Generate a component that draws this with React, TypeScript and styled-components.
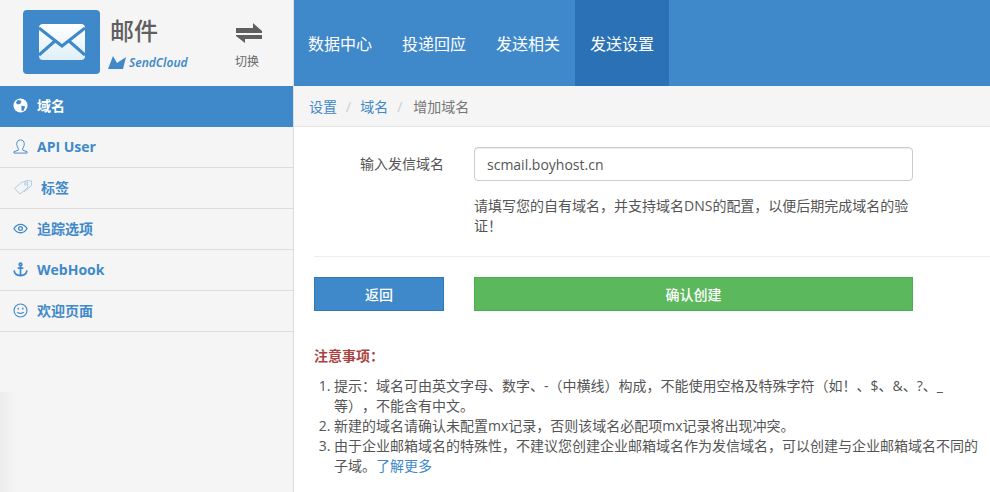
import React from 'react'
import styled, { createGlobalStyle } from 'styled-components'

const GlobalStyle = createGlobalStyle`
  html, body {
    margin: 0;
    padding: 0;
    background: #fff;
  }
  body {
    font-family: "Open Sans", "Noto Sans CJK SC", sans-serif;
    font-size: 14px;
    color: #555;
    text-spacing-trim: space-all;
  }
`

const Page = styled.div`
  width: 990px;
  height: 492px;
  overflow: hidden;
  display: grid;
  grid-template-columns: 294px 1fr;
`

const Sidebar = styled.aside`
  background: #f5f5f5;
  border-right: 1px solid #ddd;
  box-sizing: border-box;
  height: 492px;
  position: relative;
`

const Corner = styled.div`
  position: absolute;
  left: 0;
  bottom: 0;
  width: 16px;
  height: 100px;
  background: linear-gradient(90deg, #ececec, #f5f5f5);
`

const Brand = styled.div`
  height: 86px;
  box-sizing: border-box;
  display: flex;
  padding: 10px 0 0 23px;
`

const LogoBox = styled.div`
  width: 77px;
  height: 64px;
  background: #3f89ca;
  border-radius: 4px;
  display: flex;
  align-items: center;
  justify-content: center;
`

const BrandText = styled.div`
  margin-left: 10px;
  width: 98px;
`

const BrandTitle = styled.div`
  font-size: 24px;
  line-height: 32px;
  margin-top: 5px;
  color: #5f5f5f;
  font-weight: 500;
`

const CloudRow = styled.div`
  display: flex;
  align-items: center;
  gap: 3px;
  margin: 7px 0 0 -2px;
  color: #3f89ca;
  font-size: 12px;
  font-style: italic;
  font-weight: 600;
  font-family: "Noto Sans", sans-serif;
`

const Switcher = styled.div`
  margin-left: 16px;
  width: 46px;
  display: flex;
  flex-direction: column;
  align-items: center;
  color: #666;
  font-size: 12px;
  padding-top: 13px;
`

const SwitchGlyph = styled.svg`
  margin-left: 4px;
`

const SwitchLabel = styled.span`
  margin-top: 11px;
  line-height: 16px;
`

const SideItem = styled.a<{ $active?: boolean }>`
  height: 41px;
  box-sizing: border-box;
  display: flex;
  align-items: center;
  padding: 0 0 2px 13px;
  gap: 9px;
  font-size: 14px;
  font-weight: 700;
  background: ${(p) => (p.$active ? '#3f89ca' : 'transparent')};
  color: ${(p) => (p.$active ? '#fff' : '#3f89ca')};
  border-bottom: 1px solid ${(p) => (p.$active ? '#3f89ca' : '#ddd')};
`

const SideIcon = styled.svg<{ $wide?: boolean }>`
  width: ${(p) => (p.$wide ? '20px' : '15px')};
  height: 15px;
  flex: none;
`

const TagLabel = styled.span`
  margin-left: -1px;
`

const Main = styled.main`
  min-width: 0;
`

const TopNav = styled.nav`
  height: 86px;
  background: #3f89ca;
  display: flex;
  margin-left: -1px;
`

const NavItem = styled.a<{ $active?: boolean }>`
  width: 94px;
  display: flex;
  align-items: center;
  justify-content: center;
  color: #fff;
  font-size: 16px;
  background: ${(p) => (p.$active ? '#2a72b5' : 'transparent')};
`

const Crumbs = styled.div`
  height: 41px;
  box-sizing: border-box;
  background: #f5f5f5;
  border-bottom: 1px solid #e5e5e5;
  display: flex;
  align-items: center;
  padding-left: 15px;
  font-size: 14px;
  color: #777;
`

const CrumbLink = styled.a`
  color: #3f89ca;
`

const CrumbSep = styled.span`
  color: #ccc;
  margin: 0 9px;
`

const CrumbCurrent = styled.span`
  margin-left: 2px;
`

const Body = styled.div`
  padding: 20px 0 0 20px;
`

const FormRow = styled.div`
  display: grid;
  grid-template-columns: 130px 439px;
  column-gap: 30px;
`

const FieldLabel = styled.label`
  justify-self: end;
  line-height: 34px;
  color: #555;
`

const TextInput = styled.input`
  width: 100%;
  height: 34px;
  box-sizing: border-box;
  border: 1px solid #ccc;
  border-radius: 4px;
  padding: 0 12px;
  font: inherit;
  font-size: 14px;
  color: #555;
  outline: none;
  box-shadow: inset 0 1px 1px rgba(0, 0, 0, 0.075);
`

const Help = styled.p`
  grid-column: 2;
  margin: 15px 0 0;
  line-height: 20px;
  color: #555;
`

const Divider = styled.hr`
  border: 0;
  border-top: 1px solid #eee;
  margin: 20px 0;
`

const Button = styled.button<{ $color: string; $edge: string }>`
  height: 34px;
  border: 1px solid ${(p) => p.$edge};
  background: ${(p) => p.$color};
  color: #fff;
  font: inherit;
  font-size: 14px;
  font-weight: 500;
  padding: 0;
`

const NoticeTitle = styled.div`
  margin-top: 35px;
  color: #a94442;
  font-weight: 700;
  font-size: 14px;
  line-height: 20px;
`

const Notes = styled.ol`
  margin: 10px 0 0;
  padding-left: 20px;
  font-size: 14px;
  line-height: 20px;
  color: #555;
`

const MoreLink = styled.a`
  color: #3f89ca;
`

const navItems = ['数据中心', '投递回应', '发送相关', '发送设置']

const MailLogo = () => (
  <svg width="48" height="38" viewBox="0 0 48 38">
    <defs>
      <linearGradient id="env" x1="0" y1="0" x2="0" y2="1">
        <stop offset="0" stopColor="#ffffff" />
        <stop offset="1" stopColor="#dfeff8" />
      </linearGradient>
    </defs>
    <rect x="1" y="1" width="46" height="36" rx="4" fill="url(#env)" />
    <path d="M1 5 L24 23 L47 5 M1 32 L17 18 M47 32 L31 18" fill="none" stroke="#3f89ca" strokeWidth="3" />
  </svg>
)

const CloudMark = () => (
  <svg width="18" height="13" viewBox="0 0 18 13" fill="#3f89ca">
    <path d="M0 13 L5 0 L9 7 L18 1 L15 13 Z" />
  </svg>
)

const SwitchIcon = () => (
  <SwitchGlyph width="26" height="20" viewBox="0 0 26 20" fill="#5f5f5f">
    <path d="M0 5 H17 V0 L26 8 V10 H0 Z" />
    <path d="M26 12 V16 H9 V20 L0 13 V12 Z" />
  </SwitchGlyph>
)

const GlobeIcon = () => (
  <SideIcon viewBox="0 0 16 16">
    <circle cx="8" cy="8" r="7.5" fill="#fff" />
    <path d="M5 2 L9 3 L8 6 L5 7 L3 5 Z M9 8 L13 9 L11 14 L9 13 Z" fill="#3f89ca" />
  </SideIcon>
)

const UserIcon = () => (
  <SideIcon viewBox="0 0 16 16" fill="none" stroke="#3f89ca" strokeWidth="1">
    <path d="M1 15 H15 V13.5 L10.5 12 C10 11 10 10.5 10.5 9.8 C11.7 8 12 6.5 12 5 C12 2.5 10.4 1 8 1 C5.6 1 4 2.5 4 5 C4 6.5 4.3 8 5.5 9.8 C6 10.5 6 11 5.5 12 L1 13.5 Z" />
  </SideIcon>
)

const TagIcon = () => (
  <SideIcon $wide viewBox="0 0 20 16" fill="none" stroke="#a9c9e6" strokeWidth="1">
    <path d="M1 9 L9 2 L15 2 L15 8 L7 15 Z" />
    <path d="M11 2 L14 0.6 L19 1 L19 6 L11 13" />
    <circle cx="12.5" cy="4.5" r="1" />
  </SideIcon>
)

const EyeIcon = () => (
  <SideIcon viewBox="0 0 16 16" fill="none" stroke="#3f89ca" strokeWidth="1.4">
    <path d="M1 8 C3 4.5 5.5 3.5 8 3.5 C10.5 3.5 13 4.5 15 8 C13 11.5 10.5 12.5 8 12.5 C5.5 12.5 3 11.5 1 8 Z" />
    <circle cx="8" cy="8" r="2" />
  </SideIcon>
)

const AnchorIcon = () => (
  <SideIcon viewBox="0 0 16 16" fill="none" stroke="#3f89ca" strokeWidth="1.8">
    <circle cx="8" cy="2.6" r="1.4" />
    <path d="M8 4 V14.5 M5 6.5 H11 M1.2 9 C1.5 12.5 4.5 14.5 8 14.5 C11.5 14.5 14.5 12.5 14.8 9" />
  </SideIcon>
)

const SmileIcon = () => (
  <SideIcon viewBox="0 0 16 16" fill="none" stroke="#3f89ca" strokeWidth="1.2">
    <circle cx="8" cy="8" r="6.9" />
    <path d="M4.5 9.6 C5.5 11.6 10.5 11.6 11.5 9.6" />
    <path d="M5.6 5 V6.8 M10.4 5 V6.8" strokeWidth="1.5" />
  </SideIcon>
)

const App = () => {
  return (
    <Page>
      <GlobalStyle />
      <Sidebar>
        <Brand>
          <LogoBox>
            <MailLogo />
          </LogoBox>
          <BrandText>
            <BrandTitle>邮件</BrandTitle>
            <CloudRow>
              <CloudMark />
              SendCloud
            </CloudRow>
          </BrandText>
          <Switcher>
            <SwitchIcon />
            <SwitchLabel>切换</SwitchLabel>
          </Switcher>
        </Brand>
        <SideItem $active>
          <GlobeIcon />
          域名
        </SideItem>
        <SideItem>
          <UserIcon />
          API User
        </SideItem>
        <SideItem>
          <TagIcon />
          <TagLabel>标签</TagLabel>
        </SideItem>
        <SideItem>
          <EyeIcon />
          追踪选项
        </SideItem>
        <SideItem>
          <AnchorIcon />
          WebHook
        </SideItem>
        <SideItem>
          <SmileIcon />
          欢迎页面
        </SideItem>
        <Corner />
      </Sidebar>
      <Main>
        <TopNav>
          {navItems.map((item, idx) => (
            <NavItem key={item} $active={idx === 3}>
              {item}
            </NavItem>
          ))}
        </TopNav>
        <Crumbs>
          <CrumbLink>设置</CrumbLink>
          <CrumbSep>/</CrumbSep>
          <CrumbLink>域名</CrumbLink>
          <CrumbSep>/</CrumbSep>
          <CrumbCurrent>增加域名</CrumbCurrent>
        </Crumbs>
        <Body>
          <FormRow>
            <FieldLabel>输入发信域名</FieldLabel>
            <TextInput defaultValue="scmail.boyhost.cn" />
            <Help>请填写您的自有域名，并支持域名DNS的配置，以便后期完成域名的验证！</Help>
          </FormRow>
          <Divider />
          <FormRow>
            <Button $color="#3f89ca" $edge="#2f79ba">
              返回
            </Button>
            <Button $color="#5cb85c" $edge="#4cae4c">
              确认创建
            </Button>
          </FormRow>
          <NoticeTitle>注意事项：</NoticeTitle>
          <Notes>
            <li>
              提示：域名可由英文字母、数字、-（中横线）构成，不能使用空格及特殊字符（如！、$、&amp;、?、_
              <br />
              等），不能含有中文。
            </li>
            <li>新建的域名请确认未配置mx记录，否则该域名必配项mx记录将出现冲突。</li>
            <li>
              由于企业邮箱域名的特殊性，不建议您创建企业邮箱域名作为发信域名，可以创建与企业邮箱域名不同的子域。
              <MoreLink>了解更多</MoreLink>
            </li>
          </Notes>
        </Body>
      </Main>
    </Page>
  )
}

export default App
